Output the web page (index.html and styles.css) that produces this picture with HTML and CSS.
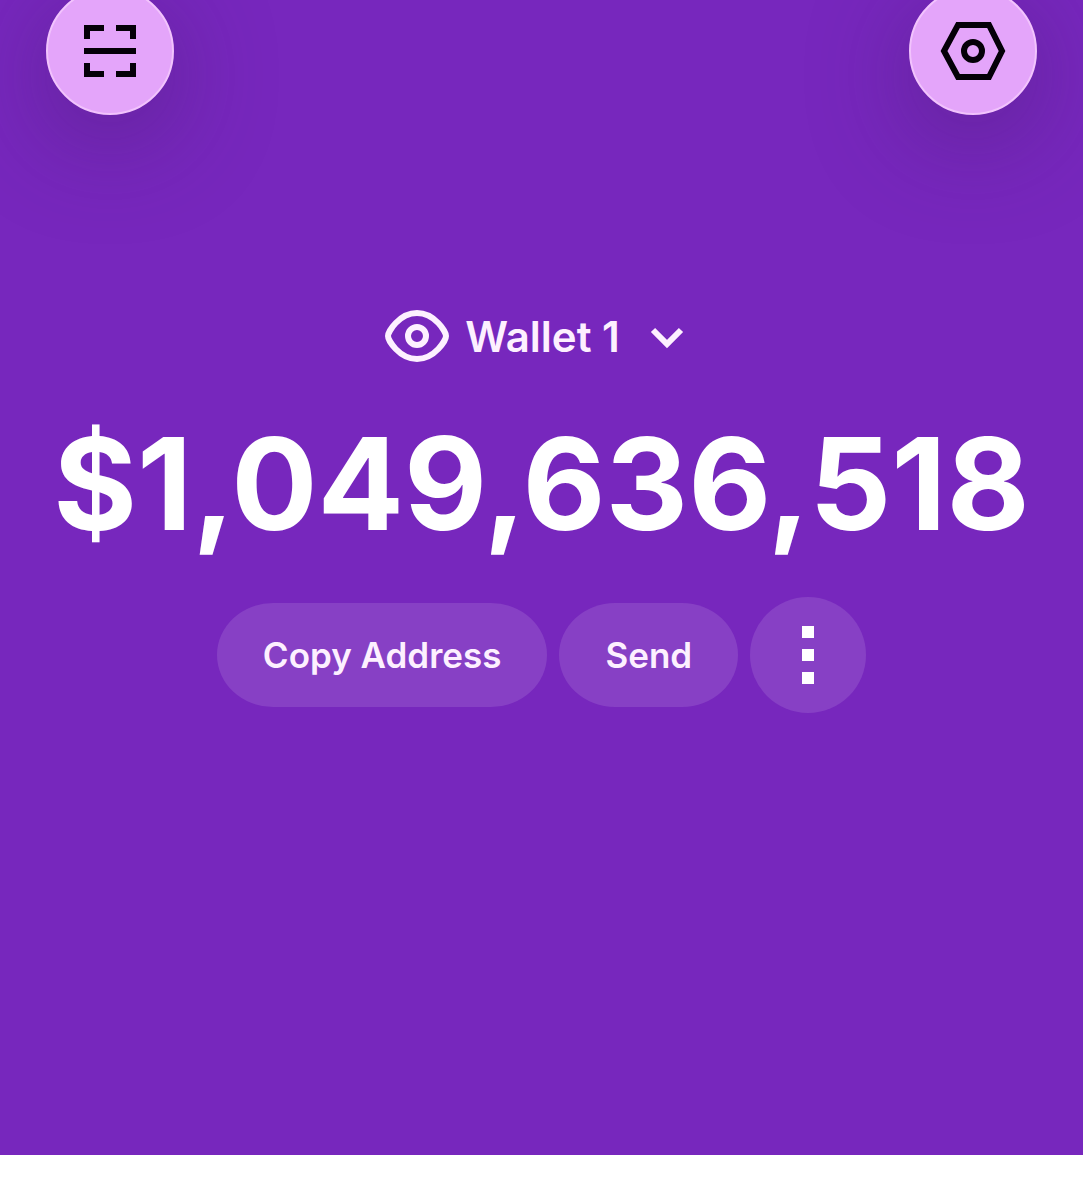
FILE: index.html
```html
<!DOCTYPE html>
<html lang="en">
<head>
    <meta charset="UTF-8">
    <meta name="viewport" content="width=device-width, initial-scale=1">
    <title>Wallet 1</title>
    <link rel="stylesheet" href="styles.css">
</head>
<body>
    <main class="wallet">
        <!-- Top buttons -->
        <header class="top-bar">
            <button class="round-button" aria-label="Scan">
                <svg width="70" height="70" viewBox="0 0 70 70" fill="none" stroke="#050008" stroke-width="6">
                    <path d="M12 23V12H29M41 12H58V23M12 47V58H29M41 58H58V47M9 35H61"/>
                </svg>
            </button>
            <button class="round-button" aria-label="Settings">
                <svg width="70" height="70" viewBox="0 0 70 70" fill="none" stroke="#050008" stroke-width="6">
                    <path d="M20 9H51L64 35L51 61H20L6 35Z"/>
                    <circle cx="35" cy="35" r="9"/>
                </svg>
            </button>
        </header>

        <!-- Wallet switcher -->
        <div class="account">
            <button class="plain-button" aria-label="Hide balance">
                <svg width="64" height="64" viewBox="0 0 64 64" fill="none" stroke="currentColor" stroke-width="6">
                    <path d="M3 32C3 28 14 9 32 9S61 28 61 32S50 55 32 55S3 36 3 32Z"/>
                    <circle cx="32" cy="32" r="9"/>
                </svg>
            </button>
            <button class="plain-button account-name">
                Wallet 1
                <svg width="64" height="64" viewBox="0 0 64 64" fill="none" stroke="currentColor" stroke-width="6">
                    <path d="M19 26L33 40L47 26"/>
                </svg>
            </button>
        </div>

        <h1 class="balance">$1,049,636,518</h1>

        <div class="actions">
            <button class="action">Copy Address</button>
            <button class="action">Send</button>
            <button class="action action-more" aria-label="More">
                <svg width="12" height="58" viewBox="0 0 12 58" fill="#fff">
                    <path d="M0 0H12V12H0ZM0 23H12V35H0ZM0 46H12V58H0Z"/>
                </svg>
            </button>
        </div>
    </main>
</body>
</html>
```

FILE: styles.css
```css
* {
    box-sizing: border-box;
}
body {
    margin: 0;
    background: #fff;
    font-family: Inter, "Liberation Sans", sans-serif;
}
button {
    border: none;
    padding: 0;
    font: inherit;
    color: inherit;
    background: none;
    cursor: pointer;
}
svg {
    display: block;
}
.wallet {
    display: flow-root;
    padding-bottom: 442px;
    background: #7727bd;
    color: #fdf0ff;
    overflow: hidden;
}
.top-bar {
    display: flex;
    justify-content: space-between;
    margin-top: -13px;
    padding: 0 46px;
}
.round-button {
    display: flex;
    align-items: center;
    justify-content: center;
    width: 128px;
    height: 128px;
    border: 2px solid #f2c3fd;
    border-radius: 50%;
    background: #e4a5fa;
    box-shadow: 0 24px 104px rgba(60, 30, 90, 0.4);
}
.account {
    display: flex;
    align-items: center;
    justify-content: center;
    gap: 16px;
    margin-top: 189px;
}
.account-name {
    display: flex;
    align-items: center;
    gap: 14px;
    font-size: 42px;
    font-weight: 600;
}
.balance {
    margin: 52px 0 0;
    color: #fff;
    font-size: 128px;
    font-weight: 700;
    line-height: 128px;
    text-align: center;
}
.actions {
    display: flex;
    align-items: center;
    justify-content: center;
    gap: 12px;
    margin-top: 49px;
}
.action {
    height: 104px;
    padding: 0 46px;
    border-radius: 56px / 52px;
    background: #8740c5;
    font-size: 35px;
    font-weight: 600;
}
.action-more {
    display: flex;
    align-items: center;
    justify-content: center;
    width: 116px;
    height: 116px;
    padding: 0;
    border-radius: 50%;
}
```
